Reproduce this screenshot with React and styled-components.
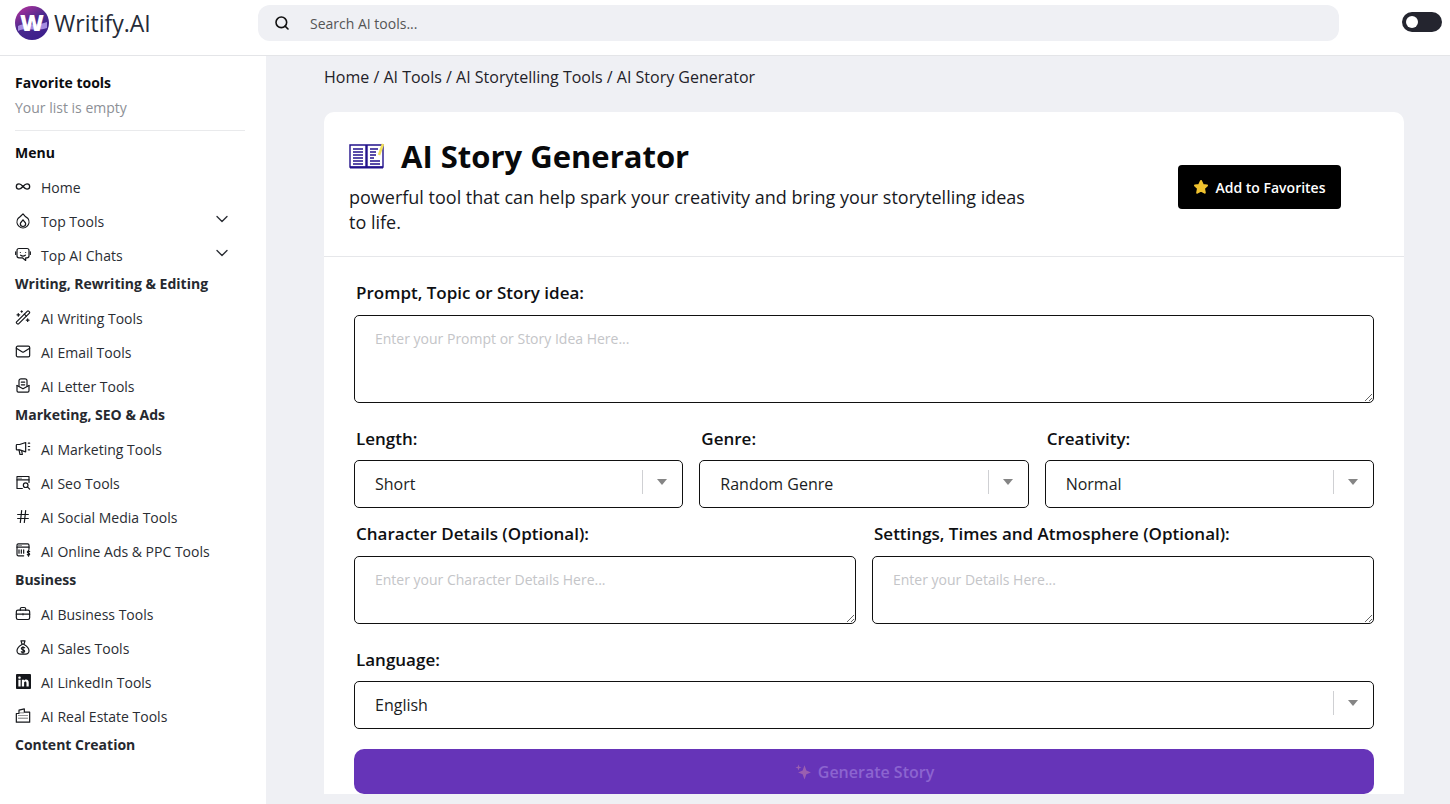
import React from 'react';
import styled, {createGlobalStyle} from 'styled-components';
import {Search, Infinity as InfinityIcon, ChevronDown, WandSparkles, Mail, Hash} from 'lucide-react';
import {BsLinkedin} from 'react-icons/bs';

const GlobalStyle = createGlobalStyle`
    html, body {
        margin: 0;
        padding: 0;
        height: 100%;
        overflow: hidden;
        background: #eff0f4;
    }
    * {
        box-sizing: border-box;
    }
    body {
        font-family: "Open Sans", "Liberation Sans", sans-serif;
        color: #1f2229;
    }
`;

const Page = styled.div`
    display: flex;
    flex-direction: column;
    height: 804px;
    overflow: hidden;
`;

const Header = styled.header`
    flex: none;
    display: flex;
    align-items: center;
    height: 56px;
    padding: 0 8px 10px 15px;
    padding-bottom: 4px;
    background: #fff;
    border-bottom: 1px solid #e4e5e8;
`;

const Brand = styled.div`
    display: flex;
    align-items: center;
    gap: 5px;
    width: 243px;
    margin-top: -6px;
`;

const LogoBadge = styled.svg`
    width: 34px;
    height: 34px;
    flex: none;
`;

const BrandName = styled.span`
    font-size: 23px;
    line-height: 30px;
    color: #252b38;
`;

const SearchBar = styled.div`
    display: flex;
    align-items: center;
    gap: 20px;
    width: 1081px;
    height: 36px;
    margin-top: -5px;
    padding-left: 16px;
    border-radius: 12px;
    background: #eff0f4;
    font-size: 14px;
    color: #555;
`;

const Toggle = styled.div`
    display: flex;
    align-items: center;
    width: 40px;
    height: 20px;
    margin-left: 63px;
    margin-top: -7px;
    padding-left: 4px;
    border-radius: 10px;
    background: #24252f;

    &::before {
        content: '';
        width: 12px;
        height: 12px;
        border-radius: 50%;
        background: #fff;
    }
`;

const Body = styled.div`
    flex: 1;
    display: flex;
    min-height: 0;
`;

const Sidebar = styled.aside`
    flex: none;
    width: 266px;
    padding: 17px 21px 0 15px;
    background: #fff;
    overflow: hidden;
`;

const SideTitle = styled.div`
    font-size: 14px;
    line-height: 20px;
    font-weight: 700;
    color: ${(p) => (p.$dark ? '#0c0d10' : '#26292f')};
    margin-top: ${(p) => p.$top || 0}px;
`;

const EmptyNote = styled.div`
    margin-top: 5px;
    font-size: 14px;
    line-height: 20px;
    color: #8d9096;
`;

const Divider = styled.hr`
    margin: 12px 0 12px;
    border: 0;
    border-top: 1px solid #e9eaec;
`;

const NavList = styled.ul`
    list-style: none;
    margin: 7px 0 0;
    padding: 0;
`;

const NavItem = styled.li`
    display: flex;
    align-items: center;
    gap: 10px;
    height: 34px;
    padding-right: 13px;
    font-size: 14px;
    color: #2a2d33;
`;

const NavIcon = styled.span`
    display: flex;
    width: 16px;
    height: 18px;
    align-items: center;
    justify-content: center;
    color: #15171b;
    margin-top: -2px;
`;

const NavLabel = styled.span`
    flex: 1;
`;

const Main = styled.main`
    flex: 1;
    min-width: 0;
    padding: 10px 46px 0 58px;
`;

const Breadcrumb = styled.div`
    font-size: 16px;
    line-height: 22px;
    color: #1f2229;
`;

const Card = styled.section`
    margin-top: 24px;
    border-radius: 10px 10px 0 0;
    background: #fff;
`;

const CardHead = styled.div`
    display: flex;
    align-items: flex-start;
    justify-content: space-between;
    height: 145px;
    padding: 23px 63px 0 25px;
    border-bottom: 1px solid #e6e7ea;
`;

const HeadText = styled.div`
    width: 690px;
`;

const TitleRow = styled.div`
    display: flex;
    align-items: center;
    gap: 16px;
`;

const Title = styled.h1`
    margin: 0;
    font-size: 31px;
    line-height: 42px;
    font-weight: 700;
    color: #08090b;
`;

const Description = styled.p`
    margin: 8px 0 0;
    font-size: 18px;
    line-height: 25px;
    color: #17191e;
`;

const FavoriteButton = styled.button`
    display: flex;
    align-items: center;
    justify-content: center;
    gap: 6px;
    width: 163px;
    height: 44px;
    margin-top: 30px;
    border: 0;
    border-radius: 4px;
    background: #000;
    color: #fff;
    font: 600 14px "Open Sans", sans-serif;
`;

const Form = styled.div`
    padding: 24px 30px 0;
`;

const Label = styled.label`
    display: block;
    padding-left: 2px;
    font-size: 17px;
    line-height: 24px;
    font-weight: 600;
    color: #0e0f12;
`;

const TextArea = styled.textarea`
    display: block;
    width: 100%;
    height: ${(p) => p.$h}px;
    margin: 10px 0 0;
    padding: 13px 20px;
    border: 1px solid #111;
    border-radius: 5px;
    background: #fff;
    font: 14px/20px "Open Sans", sans-serif;
    outline: none;

    &::placeholder {
        color: #c4c5c8;
        opacity: 1;
    }
`;

const Row = styled.div`
    display: grid;
    grid-template-columns: ${(p) => p.$cols};
    column-gap: 16px;
    margin-top: ${(p) => p.$top}px;
`;

const SelectBox = styled.div`
    display: flex;
    align-items: center;
    height: 48px;
    margin-top: 9px;
    padding: 0 15px 0 20px;
    border: 1px solid #111;
    border-radius: 5px;
    font-size: 16px;
    color: #1b1d22;
`;

const SelectValue = styled.span`
    flex: 1;
`;

const SelectCaret = styled.span`
    display: flex;
    align-items: center;
    height: 24px;
    margin-top: -4px;
    padding-left: 14px;
    border-left: 1px solid #cfd0d3;

    &::after {
        content: '';
        border-left: 5px solid transparent;
        border-right: 5px solid transparent;
        border-top: 6px solid #858585;
    }
`;

const GenerateButton = styled.button`
    display: flex;
    align-items: center;
    justify-content: center;
    gap: 6px;
    width: 100%;
    height: 45px;
    margin-top: 20px;
    border: 0;
    border-radius: 10px;
    background: #6634b8;
    color: #8c64d0;
    font: 600 16px "Open Sans", sans-serif;
`;

const line = {fill: 'none', stroke: 'currentColor', strokeWidth: 1.8, strokeLinecap: 'round', strokeLinejoin: 'round'};

const Glyph = ({children}) => (
    <svg width="17" height="17" viewBox="0 0 24 24" {...line}>
        {children}
    </svg>
);

const icons = {
    home: <InfinityIcon size={17} strokeWidth={2} />,
    wand: <WandSparkles size={17} strokeWidth={1.8} />,
    mail: <Mail size={17} strokeWidth={1.8} />,
    hash: <Hash size={17} strokeWidth={1.8} />,
    linkedin: <BsLinkedin size={15} />,
    flame: (
        <Glyph>
            <path d="M12 2l3 3.5 4.5 3.5a9 9 0 1 1-15 0L8 6z" />
            <path d="M12 21a4 4 0 0 1-4-4c0-2.5 2.5-3 4-6 1.5 3 4 3.500 4 6a4 4 0 0 1-4 4z" />
        </Glyph>
    ),
    chat: (
        <Glyph>
            <path d="M6 3h12a3 3 0 0 1 3 3v8a3 3 0 0 1-3 3h-2v4l-5-4H6a3 3 0 0 1-3-3V6a3 3 0 0 1 3-3z" />
            <path d="M8 9h.01M16 9h.01M8.500 13c2 1.500 5 1.500 7 0" />
            <path d="M1 8v4M23 8v4" />
        </Glyph>
    ),
    letter: (
        <Glyph>
            <path d="M3 12v8a2 2 0 0 0 2 2h14a2 2 0 0 0 2-2v-8" />
            <path d="M3 12l9 5 9-5" />
            <path d="M6 13V5a3 3 0 0 1 3-3h6a3 3 0 0 1 3 3v8" />
            <path d="M9.500 7h5M9.500 11h5" />
        </Glyph>
    ),
    megaphone: (
        <Glyph>
            <path d="M16 3v14L7 14H3a1 1 0 0 1-1-1V7a1 1 0 0 1 1-1h4z" />
            <path d="M6 14l1.500 7H11l-1-6" />
            <path d="M20 4h2M20 9h2M20 14h2" />
        </Glyph>
    ),
    seo: (
        <Glyph>
            <path d="M11 21H3V3h18v9" />
            <path d="M3 8h18M6 5.500h.01M9 5.500h.01" />
            <circle cx="16" cy="16" r="3.500" />
            <path d="M19 19l3 3" />
        </Glyph>
    ),
    ads: (
        <Glyph>
            <path d="M13 20H5a2 2 0 0 1-2-2V4a2 2 0 0 1 2-2h14a2 2 0 0 1 2 2v6" />
            <path d="M3 7h18M6 4.500h.01M9 4.500h.01" />
            <path d="M6 16v-5M9.500 16v-5M13 11v5" />
            <path d="M22 13.500c-.5-1-3.500-1-3.500.7 0 2 3.500 1.300 3.500 3.300 0 1.700-3 1.700-3.500.5M20.300 11.500v9" />
        </Glyph>
    ),
    briefcase: (
        <Glyph>
            <rect x="2" y="7" width="20" height="14" rx="2.500" />
            <path d="M8 7V5a2 2 0 0 1 2-2h4a2 2 0 0 1 2 2v2" />
            <path d="M2 13h20M12 12v2" />
        </Glyph>
    ),
    money: (
        <Glyph>
            <path d="M9 2h6l-1.500 5h-3z" />
            <path d="M10.500 7.500C6 10 3 13.500 3 17c0 3 2.500 5 5 5h8c2.500 0 5-2 5-5 0-3.500-3-7-7.500-9.500" />
            <path d="M14.500 12.500c-.5-1-5-1.300-5 1 0 2.500 5 1.500 5 4 0 2.200-4.500 2-5 .8M12 10.500v10" />
        </Glyph>
    ),
    building: (
        <Glyph>
            <path d="M2 22V9h4V4l8-2v5h8v15z" />
            <path d="M9 8h.01M12 8h.01M9 12h.01M12 12h.01M15 12h.01M18 12h.01M6 12h.01M6 16h.01M9 16h.01M12 16h.01M15 16h.01M18 16h.01" />
        </Glyph>
    ),
};

const sideGroups = [
    {
        title: 'Writing, Rewriting & Editing',
        top: 2,
        items: [
            ['wand', 'AI Writing Tools'],
            ['mail', 'AI Email Tools'],
            ['letter', 'AI Letter Tools'],
        ],
    },
    {
        title: 'Marketing, SEO & Ads',
        top: 2,
        items: [
            ['megaphone', 'AI Marketing Tools'],
            ['seo', 'AI Seo Tools'],
            ['hash', 'AI Social Media Tools'],
            ['ads', 'AI Online Ads & PPC Tools'],
        ],
    },
    {
        title: 'Business',
        top: 2,
        items: [
            ['briefcase', 'AI Business Tools'],
            ['money', 'AI Sales Tools'],
            ['linkedin', 'AI LinkedIn Tools'],
            ['building', 'AI Real Estate Tools'],
        ],
    },
];

function SideLink({icon, label, expandable}) {
    return (
        <NavItem>
            <NavIcon>{icons[icon]}</NavIcon>
            <NavLabel>{label}</NavLabel>
            {expandable && <ChevronDown size={20} strokeWidth={1.6} style={{marginTop: -4}} />}
        </NavItem>
    );
}

function Select({value}) {
    return (
        <SelectBox>
            <SelectValue>{value}</SelectValue>
            <SelectCaret />
        </SelectBox>
    );
}

function Logo() {
    return (
        <LogoBadge viewBox="0 0 34 34">
            <defs>
                <linearGradient id="logoFill" x1="0" y1="0" x2="0.6" y2="1">
                    <stop offset="0" stopColor="#c0329e" />
                    <stop offset="0.55" stopColor="#4a2a8e" />
                    <stop offset="1" stopColor="#3d1f8c" />
                </linearGradient>
            </defs>
            <circle cx="17" cy="17" r="17" fill="url(#logoFill)" />
            <path d="M3 20c8-4 16 1 29-4v6C22 26 12 21 3 25z" fill="#a58be0" />
            <text x="17" y="25" textAnchor="middle" fontSize="23" fontWeight="800" fill="#fff" fontFamily="Open Sans">
                W
            </text>
        </LogoBadge>
    );
}

function BookIcon() {
    return (
        <svg width="36" height="28" viewBox="0 0 36 28" fill="none" stroke="#23128c" strokeWidth="1.4">
            <path d="M1 3h16v22H1zM18 25V3h16v22z" fill="#fff" />
            <path d="M1 25.500h33" strokeWidth="2" />
            <path d="M4 7h10M4 10h10M4 13h10M4 16h10M4 19h10M4 22h10" strokeWidth="1.500" />
            <path d="M21 7h8M21 10h6M21 13h6M21 16h4M21 19h10M21 22h10" strokeWidth="1.500" />
            <path d="M30 13l4-11" stroke="#f3e25a" strokeWidth="2.500" />
        </svg>
    );
}

function App() {
    return (
        <Page>
            <GlobalStyle />
            <Header>
                <Brand>
                    <Logo />
                    <BrandName>Writify.AI</BrandName>
                </Brand>
                <SearchBar>
                    <Search size={16} strokeWidth={2.4} color="#111" />
                    Search AI tools...
                </SearchBar>
                <Toggle />
            </Header>
            <Body>
                <Sidebar>
                    <SideTitle $dark>Favorite tools</SideTitle>
                    <EmptyNote>Your list is empty</EmptyNote>
                    <Divider />
                    <SideTitle $dark>Menu</SideTitle>
                    <NavList>
                        <SideLink icon="home" label="Home" />
                        <SideLink icon="flame" label="Top Tools" expandable />
                        <SideLink icon="chat" label="Top AI Chats" expandable />
                    </NavList>
                    {sideGroups.map((group) => (
                        <React.Fragment key={group.title}>
                            <SideTitle $top={group.top}>{group.title}</SideTitle>
                            <NavList>
                                {group.items.map(([icon, label]) => (
                                    <SideLink key={label} icon={icon} label={label} />
                                ))}
                            </NavList>
                        </React.Fragment>
                    ))}
                    <SideTitle $top={2}>Content Creation</SideTitle>
                </Sidebar>
                <Main>
                    <Breadcrumb>Home / AI Tools / AI Storytelling Tools / AI Story Generator</Breadcrumb>
                    <Card>
                        <CardHead>
                            <HeadText>
                                <TitleRow>
                                    <BookIcon />
                                    <Title>AI Story Generator</Title>
                                </TitleRow>
                                <Description>
                                    powerful tool that can help spark your creativity and bring your storytelling ideas
                                    to life.
                                </Description>
                            </HeadText>
                            <FavoriteButton>
                                <svg width="16" height="16" viewBox="0 0 24 24" fill="#f0c22e" stroke="#f0c22e" strokeWidth="3" strokeLinejoin="round">
                                    <path d="M12 3l2.800 6 6.200.800-4.500 4.300 1.200 6.400L12 17.400 6.300 20.500l1.200-6.400L3 9.800 9.200 9z" />
                                </svg>
                                Add to Favorites
                            </FavoriteButton>
                        </CardHead>
                        <Form>
                            <Label>Prompt, Topic or Story idea:</Label>
                            <TextArea $h={88} placeholder="Enter your Prompt or Story Idea Here..." />
                            <Row $cols="1fr 1fr 1fr" $top={24}>
                                <div>
                                    <Label>Length:</Label>
                                    <Select value="Short" />
                                </div>
                                <div>
                                    <Label>Genre:</Label>
                                    <Select value="Random Genre" />
                                </div>
                                <div>
                                    <Label>Creativity:</Label>
                                    <Select value="Normal" />
                                </div>
                            </Row>
                            <Row $cols="1fr 1fr" $top={14}>
                                <div>
                                    <Label>Character Details (Optional):</Label>
                                    <TextArea $h={68} placeholder="Enter your Character Details Here..." />
                                </div>
                                <div>
                                    <Label>Settings, Times and Atmosphere (Optional):</Label>
                                    <TextArea $h={68} placeholder="Enter your Details Here..." />
                                </div>
                            </Row>
                            <Row $cols="1fr" $top={24}>
                                <div>
                                    <Label>Language:</Label>
                                    <Select value="English" />
                                </div>
                            </Row>
                            <GenerateButton>
                                <svg width="18" height="18" viewBox="0 0 24 24" fill="#9a5fb0">
                                    <path d="M14 3l2.500 7 6 2.500-6 2.500L14 22l-2.500-7-6-2.500 6-2.500z" />
                                    <path d="M6 2l1 3 3 1-3 1-1 3-1-3-3-1 3-1z" />
                                </svg>
                                Generate Story
                            </GenerateButton>
                        </Form>
                    </Card>
                </Main>
            </Body>
        </Page>
    );
}

export default App;
